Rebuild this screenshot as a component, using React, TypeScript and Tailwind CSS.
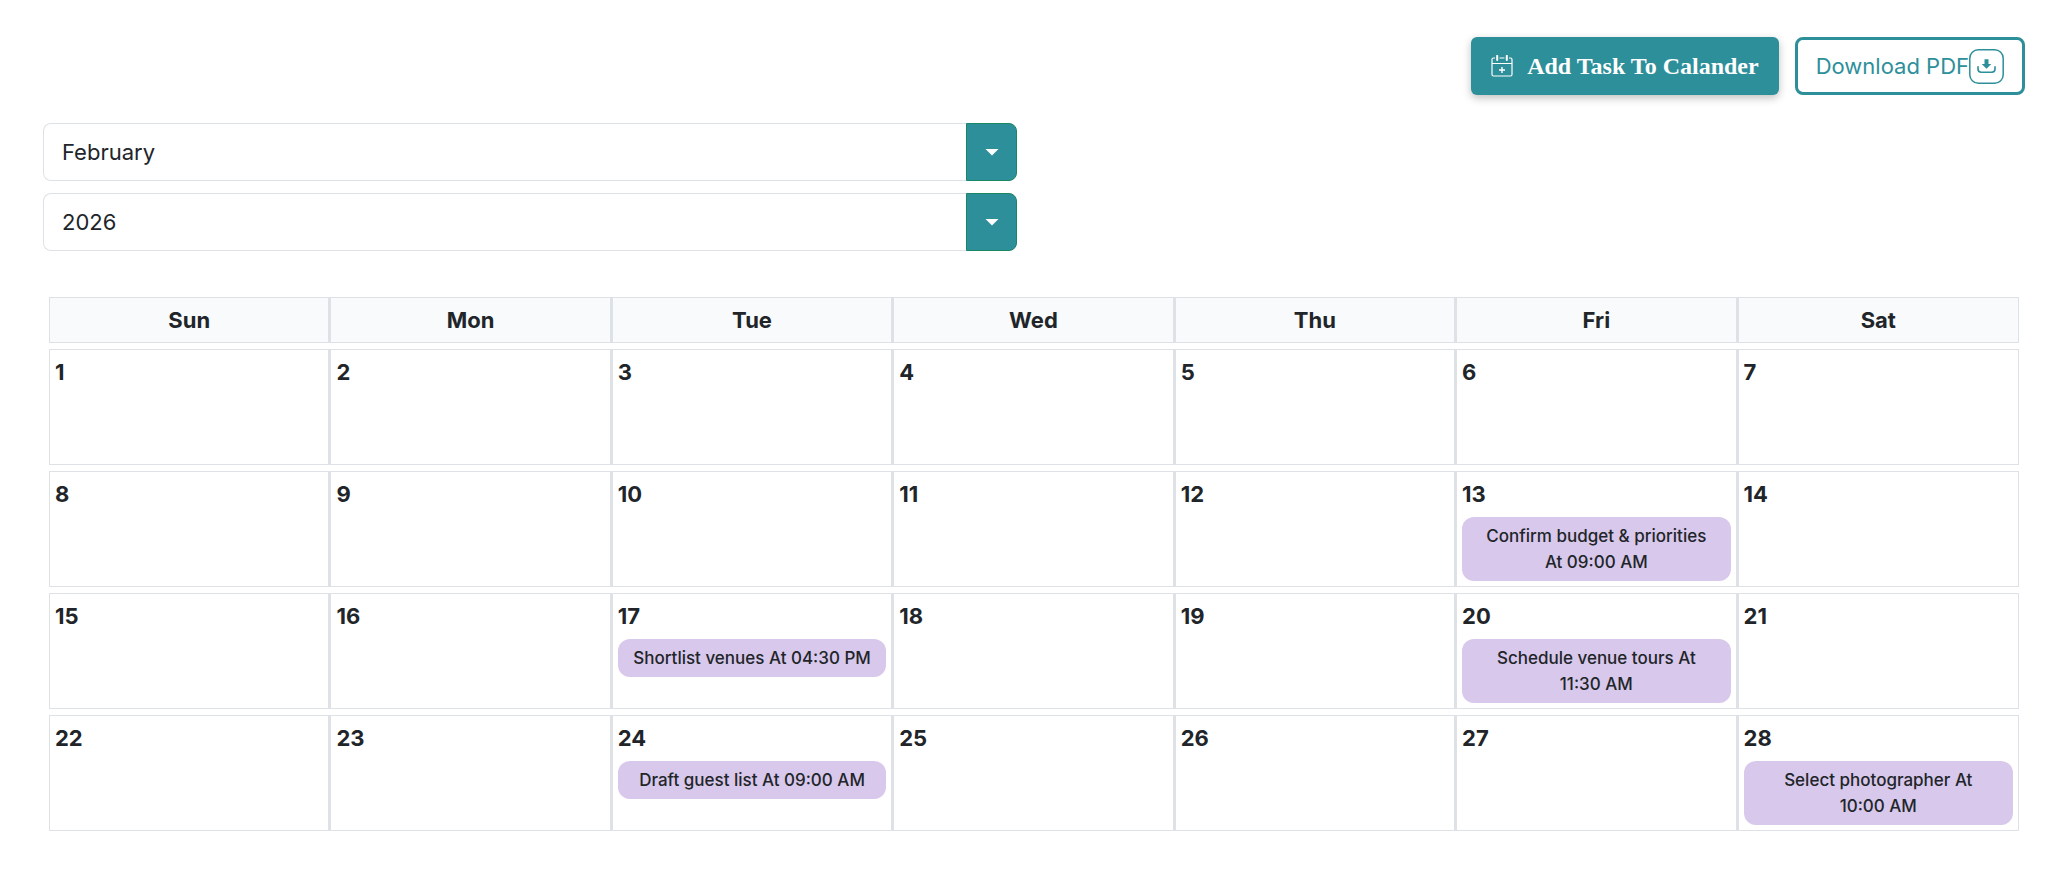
import React, { useRef, useState } from 'react';

interface CalendarTask {
  day: number;
  title: string;
  time: string;
}

interface PickerProps {
  label: string;
  value: string;
  options: string[];
  onChange: (value: string) => void;
}

const WEEK_DAYS = ['Sun', 'Mon', 'Tue', 'Wed', 'Thu', 'Fri', 'Sat'];

const MONTHS = [
  'January', 'February', 'March', 'April', 'May', 'June',
  'July', 'August', 'September', 'October', 'November', 'December',
];

const YEARS = ['2024', '2025', '2026', '2027', '2028'];

// Non-breaking space keeps AM/PM on the same line as the hour
const TASKS: CalendarTask[] = [
  { day: 13, title: 'Confirm budget & priorities', time: '09:00\u00a0AM' },
  { day: 17, title: 'Shortlist venues', time: '04:30\u00a0PM' },
  { day: 20, title: 'Schedule venue tours', time: '11:30\u00a0AM' },
  { day: 24, title: 'Draft guest list', time: '09:00\u00a0AM' },
  { day: 28, title: 'Select photographer', time: '10:00\u00a0AM' },
];

// Weeks start on Sunday, cells outside the month are null
const getWeeks = (year: number, month: number): (number | null)[][] => {
  const offset = new Date(year, month, 1).getDay();
  const total = new Date(year, month + 1, 0).getDate();
  const weeks: (number | null)[][] = [];
  for (let start = 1 - offset; start <= total; start += 7) {
    weeks.push(
      WEEK_DAYS.map((_, i) => {
        const day = start + i;
        return day > 0 && day <= total ? day : null;
      })
    );
  }
  return weeks;
};

const CalendarPlusIcon: React.FC = () => (
  <svg width="22" height="22" viewBox="0 0 22 22" fill="none" stroke="currentColor" aria-hidden="true">
    <path d="M4 3H2.500Q1 3 1 4.500V19.500Q1 21 2.500 21H19.500Q21 21 21 19.500V4.500Q21 3 19.500 3H18" strokeWidth="1.2" />
    <path d="M8.500 3H13.500M1 8.500H21" strokeWidth="1.2" />
    <path d="M6.200 .800V5M15.800 .800V5" strokeWidth="2" strokeLinecap="round" />
    <path d="M11 12V18M8 15H14" strokeWidth="1.4" />
  </svg>
);

const DownloadIcon: React.FC = () => (
  <svg width="35" height="35" viewBox="0 0 35 35" fill="none" stroke="currentColor" aria-hidden="true">
    <rect x=".8" y=".8" width="33.400" height="33.400" rx="8.500" strokeWidth="1.500" />
    <path d="M15.500 10.300H19.500V15H22.300L17.500 19.800L12.700 15H15.500Z" fill="currentColor" stroke="none" />
    <path d="M9 17.800V20Q9 23.200 12.200 23.200H22.800Q26 23.200 26 20V17.800" strokeWidth="1.600" strokeLinecap="round" />
  </svg>
);

const Picker: React.FC<PickerProps> = ({ label, value, options, onChange }) => {
  const selectRef = useRef<HTMLSelectElement>(null);

  return (
    <div className="flex h-[58px]">
      <select
        aria-label={label}
        ref={selectRef}
        value={value}
        onChange={(e) => onChange(e.target.value)}
        className="min-w-0 flex-1 appearance-none rounded-l-lg border border-r-0 border-[#dee2e6] bg-white px-[18px] text-[22px]"
      >
        {options.map((option) => (
          <option key={option} value={option}>{option}</option>
        ))}
      </select>
      <button
        type="button"
        aria-label={`Open ${label}`}
        onClick={() => selectRef.current?.showPicker()}
        className="flex w-[51px] items-center justify-center rounded-r-lg border border-[#198764] bg-[#2d8f9a] text-white"
      >
        <svg width="14" height="7" viewBox="0 0 14 7" fill="currentColor" aria-hidden="true">
          <path d="M.5 0H13.500L7 6.500Z" />
        </svg>
      </button>
    </div>
  );
};

const DayCell: React.FC<{ day: number | null }> = ({ day }) => (
  <td className="h-[116px] border border-[#dee2e6] p-[5px] align-top not-last:border-r-2">
    {day && <div className="text-[22px] leading-[34px] font-bold">{day}</div>}
    {TASKS.filter((task) => task.day === day).map((task) => (
      <div
        key={task.title}
        className="mt-1.5 rounded-xl bg-[#d8c8eb] px-[15px] py-1.5 text-center text-[17px] leading-[26px] font-medium"
      >
        {`${task.title} At ${task.time}`}
      </div>
    ))}
  </td>
);

const App: React.FC = () => {
  const [month, setMonth] = useState('February');
  const [year, setYear] = useState('2026');

  const weeks = getWeeks(Number(year), MONTHS.indexOf(month));

  return (
    <main className="bg-white pt-[37px] pr-[23px] pb-8 pl-[43px] font-['Inter',sans-serif] text-[#212529]">
      <div className="flex justify-end gap-4">
        <button
          type="button"
          className="flex h-[58px] items-center gap-3.5 rounded-md bg-[#2d8f9a] px-5 font-['Liberation_Serif',serif] text-2xl font-bold text-white shadow-[0_3px_8px_rgba(0,0,0,0.25)]"
        >
          <CalendarPlusIcon />
          Add Task To Calander
        </button>
        <button
          type="button"
          className="flex h-[58px] items-center rounded-lg border-3 border-[#2d8f9a] bg-white px-[18px] text-[22px] text-[#2d8f9a]"
        >
          Download PDF
          <DownloadIcon />
        </button>
      </div>

      <div className="mt-7 flex w-1/2 flex-col gap-3 pr-[17px]">
        <Picker label="Month" value={month} options={MONTHS} onChange={setMonth} />
        <Picker label="Year" value={year} options={YEARS} onChange={setYear} />
      </div>

      <div className="mt-10 px-1.5">
        <table className="w-full table-fixed border-separate border-spacing-x-0 border-spacing-y-1.5">
          <thead>
            <tr>
              {WEEK_DAYS.map((name) => (
                <th
                  key={name}
                  scope="col"
                  className="h-[46px] border border-[#dee2e6] bg-[#f8fafc] text-[22px] leading-8 font-bold not-last:border-r-2"
                >
                  {name}
                </th>
              ))}
            </tr>
          </thead>
          <tbody>
            {weeks.map((week, i) => (
              <tr key={i}>
                {week.map((day, j) => (
                  <DayCell key={j} day={day} />
                ))}
              </tr>
            ))}
          </tbody>
        </table>
      </div>
    </main>
  );
};

export default App;
